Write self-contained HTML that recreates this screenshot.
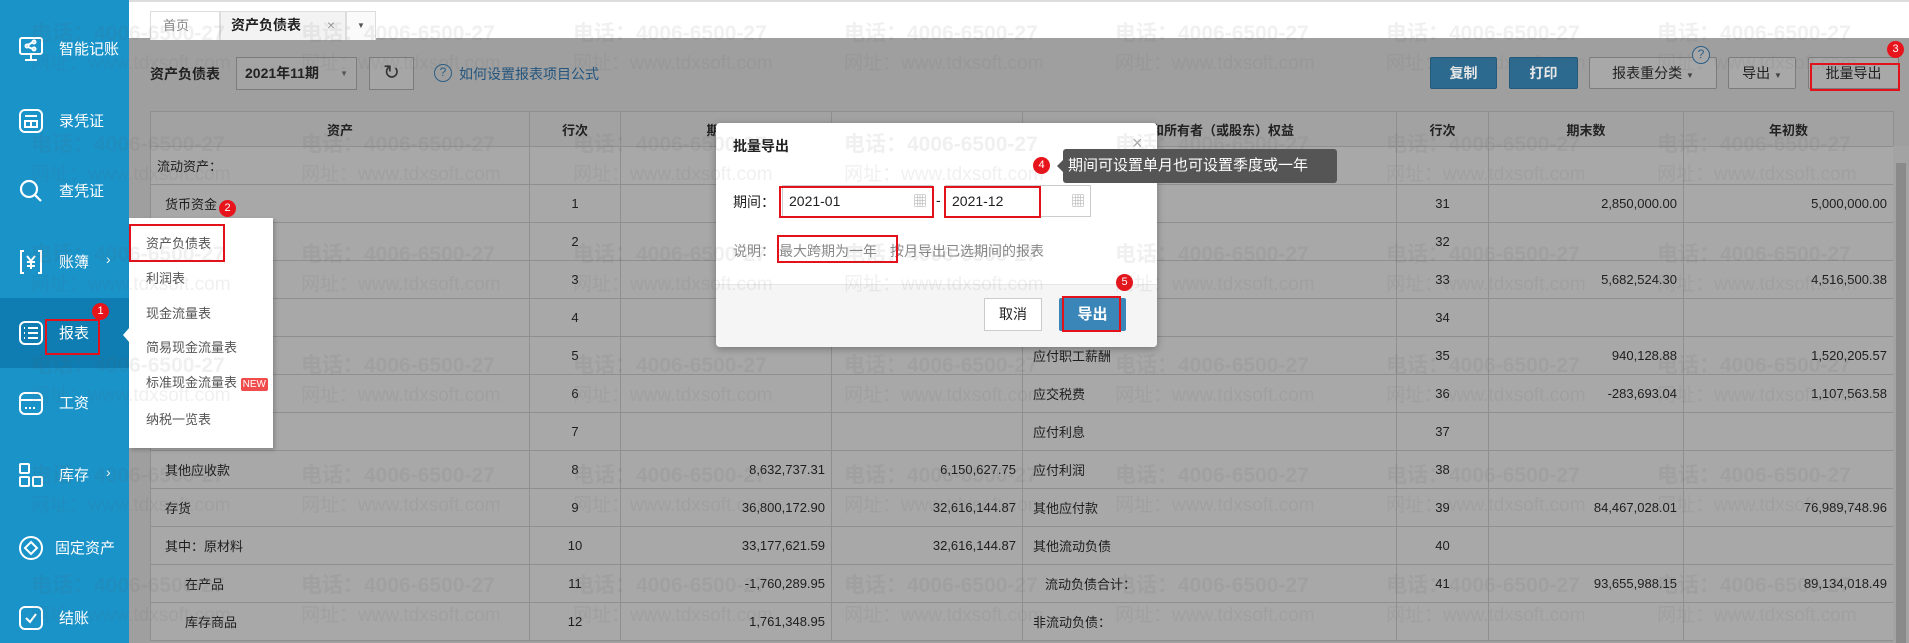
<!DOCTYPE html>
<html style="width:1909px;height:643px;overflow:hidden"><head><meta charset="utf-8">
<style>
*{margin:0;padding:0;box-sizing:border-box}
body{width:1909px;height:643px;overflow:hidden;position:relative;background:#9f9f9f;font-family:"Liberation Sans","Noto Sans CJK SC",sans-serif;font-size:13px;color:#222}
.abs{position:absolute}
#clip{position:absolute;left:0;top:0;width:1909px;height:643px;overflow:hidden}
#side{left:0;top:0;width:129px;height:643px;background:#1a93c9}
.si{position:absolute;left:0;width:129px;height:70px;color:#fff;font-size:15px}
.si .ic{position:absolute;left:18px;top:22px;width:26px;height:26px}
.si .tx{position:absolute;left:59px;top:24px}
.si .ar{position:absolute;left:106px;top:24px;font-size:14px}
#tabs{left:129px;top:0;width:1780px;height:38px;background:#fff;border-top:2px solid #ddd}
.tab{position:absolute;top:9px;height:29px;border:1px solid #ddd;border-bottom:none;background:#fafafa;font-size:13px;line-height:27px}
td,th{border:1px solid #8f8f8f}
table{border-collapse:collapse;table-layout:fixed}
th{background:#a2a2a2;height:35px;font-weight:bold;font-size:13px;color:#222}
td{background:#a8a8a8;height:38px;padding:0 6px;color:#1e1e1e}
.n{text-align:right}.c{text-align:center}
.btn{position:absolute;top:57px;height:32px;border:1px solid #7c7c7c;background:#a8a8a8;font-size:14px;text-align:center;line-height:30px;border-radius:2px;color:#222}
.bb{background:#2d6a90;border-color:#24597a;color:#e8e8e8;font-weight:bold}
.badge{position:absolute;width:17px;height:17px;border-radius:50%;background:#e8141c;color:#fff;font-size:11px;text-align:center;line-height:17px}
.rb{position:absolute;border:2px solid #e3121a}
.wm{position:absolute;color:rgba(90,90,90,0.09);white-space:nowrap;font-family:"Liberation Sans","Noto Sans CJK SC",sans-serif}
.wm b{font-size:21px}.wm span{font-size:19px}
</style></head><body><div id="clip">

<!-- toolbar -->
<div class="abs" style="left:150px;top:64px;font-size:14px;font-weight:bold">资产负债表</div>
<div class="abs" style="left:236px;top:57px;width:121px;height:33px;border:1px solid #7c7c7c;background:#a4a4a4;font-size:14px;font-weight:bold;line-height:31px;padding-left:8px">2021年11期<span style="position:absolute;right:8px;font-size:8px;color:#555">▼</span></div>
<div class="abs" style="left:369px;top:57px;width:45px;height:33px;border:1px solid #7c7c7c;background:#a6a6a6;text-align:center;line-height:31px;font-size:20px;color:#333">↻</div>
<div class="abs" style="left:434px;top:64px;width:18px;height:18px;border:1.5px solid #2b5f86;border-radius:50%;text-align:center;line-height:15px;font-size:12px;color:#2b5f86">?</div>
<div class="abs" style="left:459px;top:64px;font-size:14px;color:#23557e">如何设置报表项目公式</div>

<div class="btn bb" style="left:1430px;width:67px">复制</div>
<div class="btn bb" style="left:1509px;width:69px">打印</div>
<div class="btn" style="left:1589px;width:128px">报表重分类 <span style="font-size:8px;color:#444">▼</span></div>
<div class="abs" style="left:1692px;top:46px;width:18px;height:18px;border:1.5px solid #2b5f86;border-radius:50%;text-align:center;line-height:15px;font-size:12px;color:#2b5f86;background:#a8a8a8">?</div>
<div class="btn" style="left:1728px;width:68px">导出 <span style="font-size:8px;color:#444">▼</span></div>
<div class="btn" style="left:1808px;width:91px">批量导出</div>
<div class="rb" style="left:1810px;top:63px;width:90px;height:28px"></div>
<div class="badge" style="left:1887px;top:41px">3</div>

<!-- table -->
<table class="abs" style="left:150px;top:111px;width:1743px">
<colgroup><col style="width:379px"><col style="width:91px"><col style="width:211px"><col style="width:191px"><col style="width:374px"><col style="width:92px"><col style="width:195px"><col style="width:210px"></colgroup>
<tr><th>资产</th><th>行次</th><th>期末数</th><th>年初数</th><th>负债和所有者（或股东）权益</th><th>行次</th><th>期末数</th><th>年初数</th></tr>
<tr><td>流动资产：</td><td></td><td></td><td></td><td></td><td></td><td></td><td></td></tr>
<tr><td style="padding-left:14px">货币资金</td><td class="c">1</td><td></td><td></td><td></td><td class="c">31</td><td class="n">2,850,000.00</td><td class="n">5,000,000.00</td></tr>
<tr><td></td><td class="c">2</td><td></td><td></td><td></td><td class="c">32</td><td></td><td></td></tr>
<tr><td></td><td class="c">3</td><td></td><td></td><td></td><td class="c">33</td><td class="n">5,682,524.30</td><td class="n">4,516,500.38</td></tr>
<tr><td></td><td class="c">4</td><td></td><td></td><td></td><td class="c">34</td><td></td><td></td></tr>
<tr><td></td><td class="c">5</td><td></td><td></td><td style="padding-left:10px">应付职工薪酬</td><td class="c">35</td><td class="n">940,128.88</td><td class="n">1,520,205.57</td></tr>
<tr><td></td><td class="c">6</td><td></td><td></td><td style="padding-left:10px">应交税费</td><td class="c">36</td><td class="n">-283,693.04</td><td class="n">1,107,563.58</td></tr>
<tr><td></td><td class="c">7</td><td></td><td></td><td style="padding-left:10px">应付利息</td><td class="c">37</td><td></td><td></td></tr>
<tr><td style="padding-left:14px">其他应收款</td><td class="c">8</td><td class="n">8,632,737.31</td><td class="n">6,150,627.75</td><td style="padding-left:10px">应付利润</td><td class="c">38</td><td></td><td></td></tr>
<tr><td style="padding-left:14px">存货</td><td class="c">9</td><td class="n">36,800,172.90</td><td class="n">32,616,144.87</td><td style="padding-left:10px">其他应付款</td><td class="c">39</td><td class="n">84,467,028.01</td><td class="n">76,989,748.96</td></tr>
<tr><td style="padding-left:14px">其中：原材料</td><td class="c">10</td><td class="n">33,177,621.59</td><td class="n">32,616,144.87</td><td style="padding-left:10px">其他流动负债</td><td class="c">40</td><td></td><td></td></tr>
<tr><td style="padding-left:34px">在产品</td><td class="c">11</td><td class="n">-1,760,289.95</td><td></td><td style="padding-left:22px">流动负债合计：</td><td class="c">41</td><td class="n">93,655,988.15</td><td class="n">89,134,018.49</td></tr>
<tr><td style="padding-left:34px">库存商品</td><td class="c">12</td><td class="n">1,761,348.95</td><td></td><td style="padding-left:10px">非流动负债：</td><td></td><td></td><td></td></tr>
</table>
<div class="abs" style="left:1893px;top:146px;width:16px;height:497px;background:#a3a3a3"></div>
<div class="abs" style="left:1896px;top:163px;width:10px;height:480px;background:#8a8a8a"></div>

<!-- tab bar -->
<div id="tabs" class="abs">
<div class="tab" style="left:21px;width:70px;padding-left:12px;color:#888;background:#fff">首页</div>
<div class="tab" style="left:91px;width:126px;padding-left:10px;background:#f3f3f3;font-size:14px;font-weight:bold">资产负债表<span style="position:absolute;right:10px;color:#999;font-weight:normal">×</span></div>
<div class="tab" style="left:217px;width:30px;text-align:center;font-size:8px;color:#555">▼</div>
</div>

<!-- sidebar -->
<div id="side" class="abs">
<div class="si" style="top:14px"><svg class="ic" viewBox="0 0 26 26" fill="none" stroke="#fff" stroke-width="2"><rect x="2" y="2" width="22" height="16" rx="2"/><path d="M13 18v5M7 24h12"/><circle cx="9" cy="10" r="1.5"/><circle cx="16" cy="6" r="1.5"/><circle cx="16" cy="13" r="1.5"/><path d="M10 9l5-3M10 11l5 2"/></svg><span class="tx">智能记账</span></div>
<div class="si" style="top:86px"><svg class="ic" viewBox="0 0 26 26" fill="none" stroke="#fff" stroke-width="2"><rect x="2" y="2" width="22" height="22" rx="5"/><path d="M7 8h12M7 13h12v6H7zM13 13v6"/></svg><span class="tx">录凭证</span></div>
<div class="si" style="top:156px"><svg class="ic" viewBox="0 0 26 26" fill="none" stroke="#fff" stroke-width="2.2"><circle cx="11" cy="11" r="8"/><path d="M17 17l6 6"/></svg><span class="tx">查凭证</span></div>
<div class="si" style="top:227px"><svg class="ic" viewBox="0 0 26 26" fill="none" stroke="#fff" stroke-width="2"><path d="M6 2H3v22h3M20 2h3v22h-3"/><path d="M9 7l4 5 4-5M13 12v8M9 13h8M9 17h8"/></svg><span class="tx">账簿</span><span class="ar">›</span></div>
<div class="si" style="top:298px;background:#0f7db2"><svg class="ic" viewBox="0 0 26 26" fill="none" stroke="#fff" stroke-width="2"><rect x="2" y="2" width="22" height="22" rx="5"/><path d="M6 8h1M10 8h10M6 13h1M10 13h10M6 18h1M10 18h10"/></svg><span class="tx">报表</span></div>
<div class="si" style="top:368px"><svg class="ic" viewBox="0 0 26 26" fill="none" stroke="#fff" stroke-width="2"><rect x="2" y="3" width="22" height="21" rx="5"/><path d="M2 10h22M8 17v2M12 17v2M16 17v2"/></svg><span class="tx">工资</span></div>
<div class="si" style="top:440px"><svg class="ic" viewBox="0 0 26 26" fill="none" stroke="#fff" stroke-width="2"><rect x="2" y="2" width="9" height="9" rx="1"/><rect x="2" y="15" width="9" height="9" rx="1"/><rect x="15" y="15" width="9" height="9" rx="1"/></svg><span class="tx">库存</span><span class="ar">›</span></div>
<div class="si" style="top:513px"><svg class="ic" viewBox="0 0 26 26" fill="none" stroke="#fff" stroke-width="2"><circle cx="13" cy="13" r="11"/><path d="M13 7l6 6-6 6-6-6z"/></svg><span class="tx" style="left:55px">固定资产</span></div>
<div class="si" style="top:583px"><svg class="ic" viewBox="0 0 26 26" fill="none" stroke="#fff" stroke-width="2"><rect x="2" y="2" width="22" height="22" rx="5"/><path d="M8 13l4 4 6-8"/></svg><span class="tx">结账</span></div>
</div>
<div class="rb" style="left:45px;top:319px;width:55px;height:36px"></div>
<div class="badge" style="left:92px;top:303px">1</div>

<!-- popup menu -->
<div class="abs" style="left:129px;top:218px;width:144px;height:230px;background:#fff;box-shadow:2px 2px 4px rgba(0,0,0,.2)"></div>
<div class="abs" style="left:123px;top:327px;width:0;height:0;border-top:8px solid transparent;border-bottom:8px solid transparent;border-right:7px solid #fff"></div>
<div class="abs" style="left:146px;top:227px;font-size:13px;color:#555;line-height:34.8px">资产负债表<br>利润表<br>现金流量表<br>简易现金流量表<br>标准现金流量表 <span style="background:#f04c4c;color:#fff;font-size:10px;padding:1px 2px;border-radius:2px">NEW</span><br>纳税一览表</div>
<div class="rb" style="left:129px;top:224px;width:96px;height:38px"></div>
<div class="badge" style="left:219px;top:200px">2</div>

<!-- dialog -->
<div class="abs" style="left:716px;top:123px;width:441px;height:224px;background:#fff;border-radius:4px;box-shadow:0 2px 8px rgba(0,0,0,.3);overflow:hidden">
<div class="abs" style="left:17px;top:13px;font-size:14px;font-weight:bold">批量导出</div>
<div class="abs" style="left:416px;top:10px;font-size:18px;color:#aaa">×</div>
<div class="abs" style="left:17px;top:69px;font-size:14px">期间：</div>
<div class="abs" style="left:66px;top:62px;width:151px;height:32px;border:1px solid #ccc;padding-left:6px;line-height:30px;font-size:14px">2021-01<span style="position:absolute;right:5px;color:#aaa;font-size:14px">▦</span></div>
<div class="abs" style="left:220px;top:69px;font-size:14px">-</div>
<div class="abs" style="left:229px;top:62px;width:146px;height:32px;border:1px solid #ccc;padding-left:6px;line-height:30px;font-size:14px">2021-12<span style="position:absolute;right:5px;color:#aaa;font-size:14px">▦</span></div>
<div class="abs" style="left:17px;top:118px;font-size:14px;color:#888">说明：<span style="margin-left:4px">最大跨期为一年</span><span style="margin-left:13px">按月导出已选期间的报表</span></div>
<div class="abs" style="left:0;top:161px;width:441px;height:63px;background:#f5f5f5;border-top:1px solid #e5e5e5"></div>
<div class="abs" style="left:268px;top:175px;width:58px;height:33px;border:1px solid #ccc;background:#fff;text-align:center;line-height:31px;font-size:14px">取消</div>
<div class="abs" style="left:343px;top:175px;width:67px;height:33px;background:#3b86b8;color:#fff;text-align:center;line-height:33px;font-size:15px;font-weight:bold;border-radius:2px">导出</div>
</div>
<div class="rb" style="left:779px;top:186px;width:155px;height:32px"></div>
<div class="rb" style="left:944px;top:186px;width:97px;height:32px"></div>
<div class="rb" style="left:777px;top:235px;width:121px;height:28px"></div>
<div class="rb" style="left:1062px;top:296px;width:59px;height:36px"></div>
<div class="badge" style="left:1116px;top:274px">5</div>
<div class="badge" style="left:1033px;top:157px">4</div>
<div class="abs" style="left:1057px;top:160px;width:0;height:0;border-top:6px solid transparent;border-bottom:6px solid transparent;border-right:6px solid #555"></div>
<div class="abs" style="left:1063px;top:149px;width:274px;height:34px;background:#555;border-radius:3px;color:#fff;font-size:15px;line-height:34px;padding-left:5px">期间可设置单月也可设置季度或一年</div>

<!-- watermarks -->
<div id="wm"></div>
</div>
<script>
var xs=[31,301,573,844,1115,1386,1657],ys=[30,141,251,362,472,582],h='';
ys.forEach(function(y){xs.forEach(function(x){h+='<div class="wm" style="left:'+x+'px;top:'+(y-13)+'px"><b>电话：4006-6500-27</b></div><div class="wm" style="left:'+x+'px;top:'+(y+18)+'px"><span>网址：www.tdxsoft.com</span></div>';});});
document.getElementById('wm').innerHTML=h;
</script>
</body></html>
